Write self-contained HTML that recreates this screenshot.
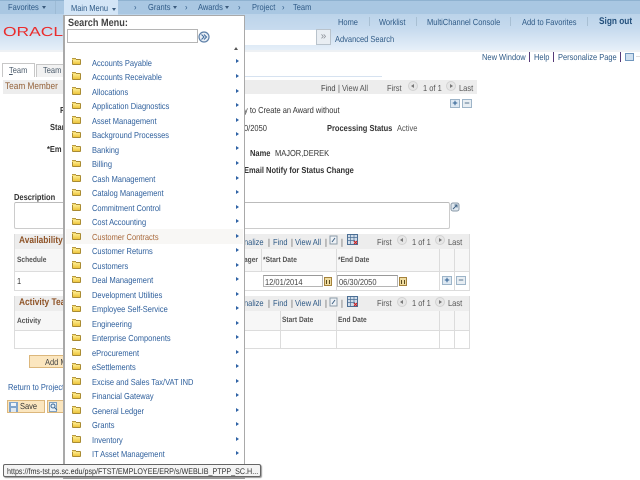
<!DOCTYPE html>
<html><head><meta charset="utf-8"><title>Team</title>
<style>
html,body{margin:0;padding:0;background:#fff}
body{width:640px;height:480px;overflow:hidden;position:relative;font-family:"Liberation Sans",Arial,sans-serif;font-size:8.7px;color:#333;filter:blur(.3px);text-rendering:geometricPrecision}
div,span.t,a,svg{position:absolute}
.t{white-space:nowrap;line-height:12px;height:12px;transform:scaleX(.862);transform-origin:0 0}
.b{font-weight:bold}
.l{color:#2a5d9f}
.n{color:#2f5a86}
.g{color:#555}
.hb{color:#8f5428;font-weight:bold;font-size:9.7px}
.lbl{color:#333;font-weight:bold}
.th{font-weight:bold;font-size:7.7px;color:#555}
.bar{background:#ededed}
.v{background:#dcdcdc;width:1px}
.h{background:#dcdcdc;height:1px}
.tri{width:0;height:0;border-left:2.5px solid transparent;border-right:2.5px solid transparent;border-top:3px solid #3a5a7c}
.pm{width:8px;height:7px;background:#dde8f2;border:1px solid #9db4c8;color:#2c5e91;font:bold 9px/7px "Liberation Sans",sans-serif;text-align:center}
.rnd{width:10px;height:10px;border-radius:50%;background:#e6e6e6;border:1px solid #d2d2d2;box-sizing:border-box}
.rnd:after{content:"";position:absolute;left:2px;top:2px;border-top:2px solid transparent;border-bottom:2px solid transparent}
.pv:after{border-right:3px solid #777}
.nx:after{border-left:3px solid #777;left:3px}
.inp{background:#fff;border:1px solid #b5b5b5;box-sizing:border-box;border-top-color:#999}
.f{width:9px;height:6.5px;background:linear-gradient(#fdeb8e,#eec53c);border:1px solid #a98b33;border-radius:1px;box-sizing:border-box;left:72px;margin-top:.5px}
.f:before{content:"";position:absolute;left:-1px;top:-2px;width:4px;height:1px;background:#f2d96f;border-top:1px solid #b79a45}
.m{left:92px;color:#2e5f9c}
.ar{left:235.5px;width:0;height:0;border-top:2.5px solid transparent;border-bottom:2.5px solid transparent;border-left:3px solid #2e62a5;margin-top:.5px}
.cal{width:8px;height:9px;background:#efdca0;border:1px solid #a5823c;box-sizing:border-box}
.cal:after{content:"";position:absolute;left:1px;top:2px;width:2px;height:4px;border-left:1px solid #5b4a1e;border-right:1px solid #5b4a1e}
.btn{background:#fbe6bf;border:1px solid #dcb77c;box-sizing:border-box}
</style></head><body>

<!-- header -->
<div style="left:0;top:0;width:640px;height:14px;background:#a9c7e2"></div>
<div style="left:0;top:0;width:640px;height:1px;background:#8fb2d0"></div>
<div style="left:0;top:14px;width:640px;height:36px;background:linear-gradient(#bcd4ea 0,#c6daee 40%,#e6f0f9 100%)"></div>
<div style="left:0;top:50px;width:640px;height:2px;background:#eef1f4"></div>
<span class="t n" style="left:8px;top:1px">Favorites</span><div class="tri" style="left:42px;top:6px"></div>
<div class="v" style="left:55px;top:1px;height:13px;background:#9dbbd5"></div>
<div style="left:64px;top:0;width:54px;height:15px;background:#d3e5f6"></div>
<span class="t n" style="left:71px;top:2px">Main Menu</span><div class="tri" style="left:112px;top:8px"></div>
<span class="t n" style="left:134px;top:1px">›</span>
<span class="t n" style="left:148px;top:1px">Grants</span><div class="tri" style="left:173px;top:6px"></div>
<span class="t n" style="left:185px;top:1px">›</span>
<span class="t n" style="left:198px;top:1px">Awards</span><div class="tri" style="left:225px;top:6px"></div>
<span class="t n" style="left:238px;top:1px">›</span>
<span class="t n" style="left:252px;top:1px">Project</span>
<span class="t n" style="left:282px;top:1px">›</span>
<span class="t n" style="left:293px;top:1px">Team</span>

<span class="t" style="left:3px;top:26px;font-size:13px;color:#ea2d2d;transform:scaleX(1.34);transform-origin:0 0">ORACLE</span>

<div class="inp" style="left:244px;top:30px;width:72px;height:15px;border:0;background:#fff"></div>
<div style="left:316px;top:29px;width:15px;height:16px;background:#e9eef3;border:1px solid #b9c3cc;box-sizing:border-box;color:#8a8f96;font:10px/13px 'Liberation Sans',sans-serif;text-align:center">»</div>
<span class="t n" style="left:335px;top:32.5px">Advanced Search</span>

<span class="t n" style="left:338px;top:16px">Home</span>
<div class="v" style="left:369px;top:17px;height:9px;background:#a8bfd3"></div>
<span class="t n" style="left:379px;top:16px">Worklist</span>
<div class="v" style="left:416px;top:17px;height:9px;background:#a8bfd3"></div>
<span class="t n" style="left:427px;top:16px">MultiChannel Console</span>
<div class="v" style="left:510px;top:17px;height:9px;background:#a8bfd3"></div>
<span class="t n" style="left:522px;top:16px">Add to Favorites</span>
<div class="v" style="left:587px;top:17px;height:9px;background:#a8bfd3"></div>
<span class="t b" style="left:599px;top:16px;color:#24507c;font-size:9.6px">Sign out</span>

<!-- page links -->
<span class="t n" style="left:482px;top:51px">New Window</span>
<div class="v" style="left:529px;top:52px;height:10px;background:#553a78"></div>
<span class="t n" style="left:534px;top:51px">Help</span>
<div class="v" style="left:553px;top:52px;height:10px;background:#553a78"></div>
<span class="t n" style="left:558px;top:51px">Personalize Page</span>
<div class="v" style="left:620px;top:52px;height:10px;background:#553a78"></div>
<div style="left:625px;top:53px;width:7px;height:6px;background:#cfe0f0;border:1px solid #6f96bd"></div>
<div class="h" style="left:636px;top:56px;width:4px"></div>

<!-- tabs -->
<div style="left:2px;top:63px;width:33px;height:14px;border:1px solid #c7c7c7;border-bottom:0;box-sizing:border-box;background:#fff"></div>
<span class="t" style="left:9px;top:64px;color:#4a5a6a"><u>T</u>eam</span>
<div style="left:36px;top:64px;width:28px;height:13px;border:1px solid #c7c7c7;border-bottom:0;box-sizing:border-box;background:#f2f2f2"></div>
<span class="t" style="left:43px;top:64px;color:#4a5a6a">Team</span>
<div style="left:244px;top:76px;width:138px;height:1px;background:#d6e2f0"></div>

<!-- team member bar -->
<div class="bar" style="left:3px;top:80px;width:474px;height:14px"></div>
<span class="t" style="left:5px;top:81px;color:#94623a;font-size:9.6px">Team Member</span>
<span class="t g" style="left:321px;top:82px;color:#444">Find</span><span class="t g" style="left:338px;top:82px">|</span><span class="t g" style="left:342px;top:82px">View All</span>
<span class="t g" style="left:387px;top:82px">First</span>
<div class="rnd pv" style="left:408px;top:81px"></div>
<span class="t g" style="left:423px;top:82px">1 of 1</span>
<div class="rnd nx" style="left:446px;top:81px"></div>
<span class="t g" style="left:459px;top:82px">Last</span>
<div class="pm" style="left:450px;top:99px">+</div>
<div class="pm" style="left:462px;top:99px;color:#56748f;background:#e8eef3">−</div>

<span class="t b" style="left:60px;top:104px">P</span>
<span class="t" style="left:244px;top:104px">y to Create an Award without</span>
<span class="t b" style="left:50px;top:121px">Star</span>
<span class="t" style="left:244px;top:121.5px">0/2050</span>
<span class="t lbl" style="left:327px;top:121.5px">Processing Status</span>
<span class="t g" style="left:397px;top:121.5px">Active</span>
<span class="t b" style="left:47px;top:143px">*Em</span>
<span class="t b" style="left:250px;top:146.5px">Name</span>
<span class="t" style="left:275px;top:146.5px">MAJOR,DEREK</span>
<span class="t b" style="left:244px;top:164px">Email Notify for Status Change</span>

<span class="t lbl" style="left:14px;top:190.5px">Description</span>
<div style="left:14px;top:202px;width:436px;height:27px;border:1px solid #ccc;box-sizing:border-box;border-radius:2px;border-top-color:#bbb"></div>
<svg style="left:450px;top:202px" width="10" height="10" viewBox="0 0 10 10"><rect x="1" y="1" width="8" height="8" rx="2" fill="#dfe7ee" stroke="#8a9aa8"/><path d="M3 7l4-4M4.5 3H7v2.5" stroke="#3e6184" fill="none"/></svg>

<!-- availability grid -->
<div class="bar" style="left:14px;top:234px;width:456px;height:15px"></div>
<div style="left:14px;top:249px;width:456px;height:22px;background:#f7f7f7"></div>
<div class="h" style="left:14px;top:271px;width:456px"></div>
<div class="h" style="left:14px;top:290px;width:456px"></div>
<div class="v" style="left:14px;top:234px;height:57px"></div>
<div class="v" style="left:469px;top:234px;height:57px"></div>
<div class="v" style="left:336px;top:249px;height:41px"></div>
<div class="v" style="left:439px;top:249px;height:41px"></div>
<div class="v" style="left:454px;top:249px;height:41px"></div>
<div class="v" style="left:261px;top:249px;height:22px"></div>
<span class="t hb" style="left:19px;top:235px">Availability</span>
<span class="t n" style="left:244px;top:235.5px">nalize</span><span class="t g" style="left:268px;top:235.5px">|</span><span class="t n" style="left:273px;top:235.5px">Find</span><span class="t g" style="left:291px;top:235.5px">|</span><span class="t n" style="left:295px;top:235.5px">View All</span><span class="t g" style="left:325px;top:235.5px">|</span>
<svg style="left:329px;top:235px" width="10" height="10" viewBox="0 0 10 10"><rect x="1" y="1" width="7" height="8" fill="#eef2f6" stroke="#8a9aa8"/><path d="M3 7l3-4" stroke="#3e6184"/></svg>
<span class="t g" style="left:341px;top:235.5px">|</span>
<svg style="left:347px;top:234px" width="11" height="11" viewBox="0 0 11 11"><rect x="0.5" y="0.5" width="10" height="10" fill="#cfdcea" stroke="#4c6f95"/><path d="M0 3.5h11M0 6.5h8M3.5 0v11M7 0v8" stroke="#4c6f95" stroke-width=".7"/><path d="M7 7l3 3M10 7l-3 3" stroke="#c22" stroke-width="1.2"/></svg>
<span class="t g" style="left:377px;top:235.5px">First</span>
<div class="rnd pv" style="left:397px;top:235px"></div>
<span class="t g" style="left:412px;top:235.5px">1 of 1</span>
<div class="rnd nx" style="left:435px;top:235px"></div>
<span class="t g" style="left:448px;top:235.5px">Last</span>
<span class="t th" style="left:17px;top:254px">Schedule</span>
<span class="t th" style="left:244px;top:254px">ager</span>
<span class="t th" style="left:263px;top:254px">*Start Date</span>
<span class="t th" style="left:338px;top:254px">*End Date</span>
<span class="t" style="left:17px;top:275px">1</span>
<div class="inp" style="left:263px;top:275px;width:60px;height:12px"></div>
<span class="t" style="left:265px;top:275.5px;color:#444">12/01/2014</span>
<div class="cal" style="left:324px;top:277px"></div>
<div class="inp" style="left:337px;top:275px;width:61px;height:12px"></div>
<span class="t" style="left:339px;top:275.5px;color:#444">06/30/2050</span>
<div class="cal" style="left:399px;top:277px"></div>
<div class="pm" style="left:442px;top:276px">+</div>
<div class="pm" style="left:456px;top:276px;color:#56748f;background:#e8eef3">−</div>

<!-- activity grid -->
<div class="bar" style="left:14px;top:296px;width:456px;height:15px"></div>
<div style="left:14px;top:311px;width:456px;height:19px;background:#f7f7f7"></div>
<div class="h" style="left:14px;top:330px;width:456px"></div>
<div class="h" style="left:14px;top:348px;width:456px"></div>
<div class="v" style="left:14px;top:296px;height:53px"></div>
<div class="v" style="left:469px;top:296px;height:53px"></div>
<div class="v" style="left:280px;top:311px;height:37px"></div>
<div class="v" style="left:336px;top:311px;height:37px"></div>
<div class="v" style="left:439px;top:311px;height:37px"></div>
<div class="v" style="left:454px;top:311px;height:37px"></div>
<span class="t hb" style="left:19px;top:297px">Activity Tea</span>
<span class="t n" style="left:244px;top:297px">nalize</span><span class="t g" style="left:268px;top:297px">|</span><span class="t n" style="left:273px;top:297px">Find</span><span class="t g" style="left:291px;top:297px">|</span><span class="t n" style="left:295px;top:297px">View All</span><span class="t g" style="left:325px;top:297px">|</span>
<svg style="left:329px;top:297px" width="10" height="10" viewBox="0 0 10 10"><rect x="1" y="1" width="7" height="8" fill="#eef2f6" stroke="#8a9aa8"/><path d="M3 7l3-4" stroke="#3e6184"/></svg>
<span class="t g" style="left:341px;top:297px">|</span>
<svg style="left:347px;top:296px" width="11" height="11" viewBox="0 0 11 11"><rect x="0.5" y="0.5" width="10" height="10" fill="#cfdcea" stroke="#4c6f95"/><path d="M0 3.5h11M0 6.5h8M3.5 0v11M7 0v8" stroke="#4c6f95" stroke-width=".7"/><path d="M7 7l3 3M10 7l-3 3" stroke="#c22" stroke-width="1.2"/></svg>
<span class="t g" style="left:377px;top:297px">First</span>
<div class="rnd pv" style="left:397px;top:297px"></div>
<span class="t g" style="left:412px;top:297px">1 of 1</span>
<div class="rnd nx" style="left:435px;top:297px"></div>
<span class="t g" style="left:448px;top:297px">Last</span>
<span class="t th" style="left:17px;top:314.5px">Activity</span>
<span class="t th" style="left:282px;top:314px">Start Date</span>
<span class="t th" style="left:338px;top:314px">End Date</span>

<div class="btn" style="left:29px;top:355px;width:40px;height:13px"></div>
<span class="t" style="left:45px;top:355.5px;color:#444">Add M</span>
<span class="t l" style="left:8px;top:381px">Return to Project</span>
<div class="btn" style="left:7px;top:400px;width:38px;height:13px"></div>
<svg style="left:9px;top:402px" width="9" height="10" viewBox="0 0 9 10"><rect width="9" height="10" fill="#7fa4cc"/><rect x="2" y="1" width="5" height="3" fill="#eef3f8"/><rect x="2" y="6" width="5" height="4" fill="#dfe8f1"/></svg>
<span class="t" style="left:20px;top:399.5px;color:#333">Save</span>
<div class="btn" style="left:47px;top:400px;width:20px;height:13px"></div>
<svg style="left:49px;top:402px" width="11" height="10" viewBox="0 0 11 10"><rect x=".5" y=".5" width="7" height="9" fill="#e8f0f7" stroke="#7fa0c0"/><circle cx="4" cy="4" r="2" fill="none" stroke="#3e6a96"/><path d="M5.5 5.5L8 8" stroke="#3e6a96"/></svg>

<!-- menu -->
<div style="left:63px;top:15px;width:182px;height:464px;background:#fff;border-left:2px solid #a9a9a9;border-right:1px solid #a9a9a9;border-bottom:2px solid #9a9a9a;box-sizing:border-box"></div>
<div style="left:63px;top:15px;width:182px;height:1px;background:#a9a9a9"></div>
<span class="t b" style="left:68px;top:17px;font-size:10.6px;color:#444">Search Menu:</span>
<div style="left:67px;top:29px;width:131px;height:14px;background:#fff;border:1px solid #b5b5b5;box-sizing:border-box"></div>
<svg style="left:198px;top:31px" width="12" height="12" viewBox="0 0 12 12"><circle cx="6" cy="6" r="5" fill="#e8eef5" stroke="#5e80a8" stroke-width="1.2"/><path d="M3.5 3.5L6 6 3.5 8.5M6 3.5L8.5 6 6 8.5" fill="none" stroke="#3e6a9c"/></svg>
<div style="left:234px;top:47px;width:0;height:0;border-left:2.5px solid transparent;border-right:2.5px solid transparent;border-bottom:3px solid #555"></div>
<div style="left:66px;top:228.5px;width:177px;height:15px;background:#f8f7f5"></div>

<div class="f" style="top:58px"></div><span class="t m" style="top:56.5px">Accounts Payable</span><div class="ar" style="top:58.5px"></div>
<div class="f" style="top:72.5px"></div><span class="t m" style="top:71px">Accounts Receivable</span><div class="ar" style="top:73px"></div>
<div class="f" style="top:87.5px"></div><span class="t m" style="top:86px">Allocations</span><div class="ar" style="top:88px"></div>
<div class="f" style="top:102px"></div><span class="t m" style="top:100px">Application Diagnostics</span><div class="ar" style="top:102.5px"></div>
<div class="f" style="top:116.5px"></div><span class="t m" style="top:114.5px">Asset Management</span><div class="ar" style="top:117px"></div>
<div class="f" style="top:131px"></div><span class="t m" style="top:129px">Background Processes</span><div class="ar" style="top:131.5px"></div>
<div class="f" style="top:145px"></div><span class="t m" style="top:143.5px">Banking</span><div class="ar" style="top:145.5px"></div>
<div class="f" style="top:160px"></div><span class="t m" style="top:158px">Billing</span><div class="ar" style="top:160.5px"></div>
<div class="f" style="top:174.5px"></div><span class="t m" style="top:172.5px">Cash Management</span><div class="ar" style="top:175px"></div>
<div class="f" style="top:189px"></div><span class="t m" style="top:187px">Catalog Management</span><div class="ar" style="top:189.5px"></div>
<div class="f" style="top:203.5px"></div><span class="t m" style="top:201.5px">Commitment Control</span><div class="ar" style="top:204px"></div>
<div class="f" style="top:218px"></div><span class="t m" style="top:216px">Cost Accounting</span><div class="ar" style="top:218.5px"></div>
<div class="f" style="top:232.5px"></div><span class="t m" style="top:230.5px;color:#a8683a">Customer Contracts</span><div class="ar" style="top:233px"></div>
<div class="f" style="top:247px"></div><span class="t m" style="top:245px">Customer Returns</span><div class="ar" style="top:247.5px"></div>
<div class="f" style="top:261.5px"></div><span class="t m" style="top:259.5px">Customers</span><div class="ar" style="top:262px"></div>
<div class="f" style="top:276px"></div><span class="t m" style="top:274px">Deal Management</span><div class="ar" style="top:276.5px"></div>
<div class="f" style="top:290.5px"></div><span class="t m" style="top:288.5px">Development Utilities</span><div class="ar" style="top:291px"></div>
<div class="f" style="top:305px"></div><span class="t m" style="top:303px">Employee Self-Service</span><div class="ar" style="top:305.5px"></div>
<div class="f" style="top:319.5px"></div><span class="t m" style="top:317.5px">Engineering</span><div class="ar" style="top:320px"></div>
<div class="f" style="top:334px"></div><span class="t m" style="top:332px">Enterprise Components</span><div class="ar" style="top:334.5px"></div>
<div class="f" style="top:348.5px"></div><span class="t m" style="top:346.5px">eProcurement</span><div class="ar" style="top:349px"></div>
<div class="f" style="top:363px"></div><span class="t m" style="top:361px">eSettlements</span><div class="ar" style="top:363.5px"></div>
<div class="f" style="top:377.5px"></div><span class="t m" style="top:375.5px">Excise and Sales Tax/VAT IND</span><div class="ar" style="top:378px"></div>
<div class="f" style="top:392px"></div><span class="t m" style="top:390px">Financial Gateway</span><div class="ar" style="top:392.5px"></div>
<div class="f" style="top:406.5px"></div><span class="t m" style="top:404.5px">General Ledger</span><div class="ar" style="top:407px"></div>
<div class="f" style="top:421px"></div><span class="t m" style="top:419px">Grants</span><div class="ar" style="top:421.5px"></div>
<div class="f" style="top:435.5px"></div><span class="t m" style="top:433.5px">Inventory</span><div class="ar" style="top:436px"></div>
<div class="f" style="top:450px"></div><span class="t m" style="top:448px">IT Asset Management</span><div class="ar" style="top:450.5px"></div>
<div class="f" style="top:464.5px"></div>

<!-- status tooltip -->
<div style="left:3px;top:464px;width:258px;height:13px;background:#f4f4f4;border:1px solid #666;box-sizing:border-box;border-radius:2px;box-shadow:1px 1px 1px #999"></div>
<span class="t" style="left:7px;top:464.5px;color:#333;font-size:8.3px">https://fms-tst.ps.sc.edu/psp/FTST/EMPLOYEE/ERP/s/WEBLIB_PTPP_SC.H...</span>
</body></html>
